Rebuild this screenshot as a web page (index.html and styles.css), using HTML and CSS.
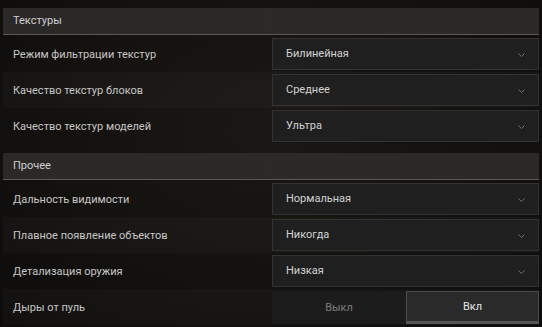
FILE: index.html
```html
<!DOCTYPE html>
<html lang="ru">
<head>
  <meta charset="UTF-8">
  <title>Настройки графики</title>
  <link rel="stylesheet" href="styles.css">
</head>
<body>
  <div class="settings">
    <div class="section">
      <div class="section-title">Текстуры</div>
      <div class="row">
        <div class="label">Режим фильтрации текстур</div>
        <div class="select">Билинейная<svg class="chevron" viewBox="0 0 7 4"><polyline points="0.5,0.5 3.5,3.5 6.5,0.5"/></svg></div>
      </div>
      <div class="row alt">
        <div class="label">Качество текстур блоков</div>
        <div class="select">Среднее<svg class="chevron" viewBox="0 0 7 4"><polyline points="0.5,0.5 3.5,3.5 6.5,0.5"/></svg></div>
      </div>
      <div class="row">
        <div class="label">Качество текстур моделей</div>
        <div class="select">Ультра<svg class="chevron" viewBox="0 0 7 4"><polyline points="0.5,0.5 3.5,3.5 6.5,0.5"/></svg></div>
      </div>
    </div>

    <div class="section">
      <div class="section-title">Прочее</div>
      <div class="row">
        <div class="label">Дальность видимости</div>
        <div class="select">Нормальная<svg class="chevron" viewBox="0 0 7 4"><polyline points="0.5,0.5 3.5,3.5 6.5,0.5"/></svg></div>
      </div>
      <div class="row alt">
        <div class="label">Плавное появление объектов</div>
        <div class="select">Никогда<svg class="chevron" viewBox="0 0 7 4"><polyline points="0.5,0.5 3.5,3.5 6.5,0.5"/></svg></div>
      </div>
      <div class="row">
        <div class="label">Детализация оружия</div>
        <div class="select">Низкая<svg class="chevron" viewBox="0 0 7 4"><polyline points="0.5,0.5 3.5,3.5 6.5,0.5"/></svg></div>
      </div>
      <div class="row alt">
        <div class="label">Дыры от пуль</div>
        <div class="toggle">
          <div class="toggle-option">Выкл</div>
          <div class="toggle-option active">Вкл</div>
        </div>
      </div>
    </div>
  </div>
</body>
</html>
```

FILE: styles.css
```css
body {
  margin: 0;
  background: radial-gradient(ellipse at 50% 40%, #1a1714 0%, #12100e 70%, #0e0c0b 100%);
  height: 327px;
  overflow: hidden;
  font-family: Roboto, "Liberation Sans", sans-serif;
  font-size: 11px;
  color: #c6c6c6;
}

.settings {
  padding: 8px 3px 0;
  display: flex;
  flex-direction: column;
  gap: 9px;
}

.section-title {
  height: 26px;
  line-height: 26px;
  padding-left: 10px;
  background: linear-gradient(90deg, #2a2927 0%, #2c2a28 50%, #2a2927 100%);
  border-bottom: 1px solid #5b5955;
  margin-bottom: 1px;
  color: #cfcfcf;
}

.row {
  display: grid;
  grid-template-columns: 269px 1fr;
  align-items: center;
  height: 36px;
  padding: 2px 0;
  box-sizing: border-box;
}

.row.alt {
  background: rgba(255, 255, 255, 0.025);
}

.label {
  padding-left: 10px;
}

.select {
  position: relative;
  height: 32px;
  line-height: 30px;
  box-sizing: border-box;
  padding-left: 13px;
  background: #1f1f1f;
  border: 1px solid #323232;
  color: #d2d2d2;
}

.chevron {
  position: absolute;
  right: 13px;
  top: 14px;
  width: 7px;
  height: 4px;
  fill: none;
  stroke: #707070;
  stroke-width: 1;
}

.toggle {
  display: grid;
  grid-template-columns: 134px 1fr;
  height: 33px;
  background: #1c1c1c;
}

.toggle-option {
  display: flex;
  align-items: center;
  justify-content: center;
  color: #7c7c7c;
  box-sizing: border-box;
}

.toggle-option.active {
  background: #2a2a2a;
  border: 1px solid #4c4c4c;
  border-bottom: 3px solid #555;
  color: #e6e6e6;
}
```
